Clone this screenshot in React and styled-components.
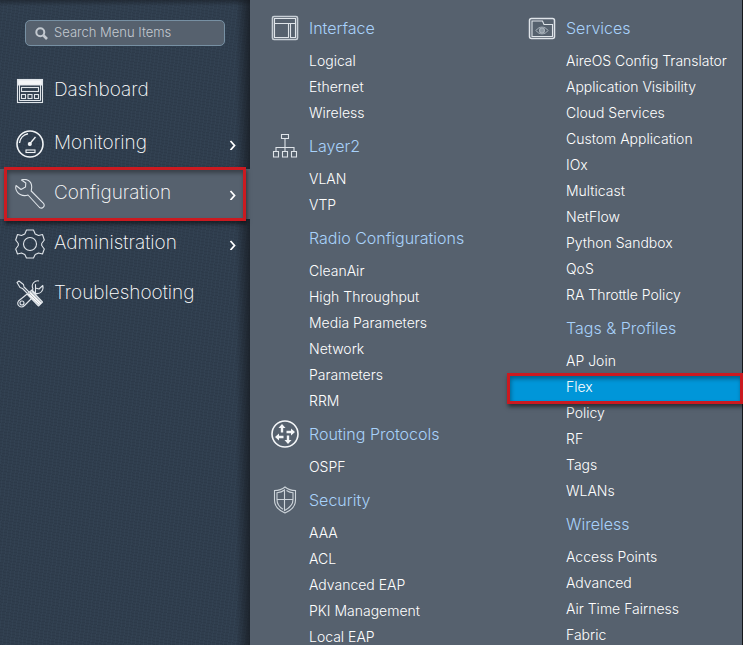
import React, { useState } from 'react';
import styled, { createGlobalStyle, css } from 'styled-components';

const GlobalStyle = createGlobalStyle`
  * { box-sizing:border-box; }
  body { margin:0; background:#56616e; font-family:Inter, "Liberation Sans", Arial, sans-serif; color:#fff; }
  ul { list-style:none; margin:0; padding:0; }
  a { color:inherit; text-decoration:none; }
`;

const Page = styled.div`display:flex; height:100vh; overflow:hidden;`;

const Sidebar = styled.aside`
  flex:0 0 250px;
  min-width:0;
  padding-top:20px;
  background-color:#303e4e;
  background-image:
    linear-gradient(to right, transparent 236px, rgba(20,24,30,0.7) 100%),
    linear-gradient(to bottom, rgba(20,24,30,0.5), transparent 6px),
    repeating-linear-gradient(97deg, rgba(70,95,115,0.12) 0 1px, transparent 1px 4px),
    repeating-linear-gradient(10deg, rgba(15,25,35,0.1) 0 1px, transparent 1px 3px);
`;
const SearchBox = styled.label`
  display:flex;
  align-items:center;
  gap:6px;
  height:26px;
  margin:0 25px 20px;
  padding:0 9px;
  border:1px solid #7790a3;
  border-radius:5px;
  background:#56616e;
  svg { flex:none; }
`;
const SearchInput = styled.input`
  flex:1;
  width:100%;
  min-width:0;
  padding:0 0 2px;
  border:0;
  outline:0;
  background:none;
  color:#fff;
  font:300 13px Inter, "Liberation Sans", sans-serif;
  &::placeholder { color:#c3c9d0; opacity:1; }
`;

const Marked = css`
  position:relative;
  &::after {
    content:'';
    position:absolute;
    inset:${({ $inset }) => $inset};
    border:3px solid #cb1a20;
    box-shadow:1px 3px 4px rgba(0,0,0,0.5), inset 1px 3px 4px rgba(0,0,0,0.35);
    pointer-events:none;
  }
`;

const MenuRow = styled.a`
  display:flex;
  align-items:center;
  gap:9px;
  height:50px;
  padding:0 13px 0 15px;
  background:${({ $active }) => $active ? '#56616e' : 'none'};
  svg { flex:none; }
  ${({ $active }) => $active && Marked}
`;
const MenuList = styled.ul`li:first-child { margin-bottom:3px; }`;
const MenuLabel = styled.span`flex:1; padding-bottom:3px; font-size:19px; font-weight:200; line-height:24px;`;

const Panel = styled.nav`
  flex:1;
  display:grid;
  grid-template-columns:minmax(0, 257fr) minmax(0, 235fr);
  align-items:start;
  padding-top:8px;
  background:#56616e;
  border-right:1px solid #15181c;
`;
const GroupTitle = styled.h2`
  display:grid;
  grid-template-columns:28px 1fr;
  align-items:center;
  gap:10px;
  height:40px;
  margin:0;
  padding-left:21px;
  color:#a8d1fa;
  font-size:16px;
  font-weight:300;
  span { grid-column:2; }
`;
const SubLink = styled.a`
  display:block;
  padding-left:59px;
  font-size:14px;
  font-weight:300;
  line-height:26px;
  white-space:nowrap;
  background:${({ $active }) => $active ? '#0096d9' : 'none'};
  box-shadow:${({ $active }) => $active ? '0 2px #0096d9' : 'none'};
  ${({ $active }) => $active && Marked}
`;

const Icon = ({ size = 28, children, ...rest }) => (
  <svg width={size} height={size} viewBox={`0 0 ${size} ${size}`} fill="none" stroke="#dfe4e9" strokeWidth="1.1" aria-hidden="true" {...rest}>
    {children}
  </svg>
);

const SearchIcon = () => (
  <Icon size={13} stroke="#c3c9d0">
    <circle cx="5.3" cy="5.3" r="4" strokeWidth="2" />
    <path d="M8.5 8.5L12 12" strokeWidth="2.6" />
  </Icon>
);

const Chevron = () => (
  <svg width="8" height="12" viewBox="0 0 8 12" fill="none" stroke="#fff" strokeWidth="1.8" aria-hidden="true">
    <path d="M1.5 3l4 4.5-4 4.5" />
  </svg>
);

const DashboardIcon = () => (
  <Icon size={30}>
    <rect x="2.5" y="3.5" width="25" height="23" />
    <path d="M3 4h24v5H3z" fill="#f4f6f8" />
    <path d="M4.5 9v15.5h21V9" strokeWidth="1" />
    <rect x="6.5" y="11.5" width="17" height="4" />
    <rect x="6.5" y="18.5" width="4" height="4" />
    <rect x="13" y="18.5" width="4" height="4" />
    <rect x="19.5" y="18.5" width="4" height="4" />
  </Icon>
);

const MonitoringIcon = () => (
  <Icon size={30} stroke="#f1f4f6">
    <circle cx="15" cy="15" r="13" strokeWidth="1.6" />
    <path d="M4.5 14A10.5 10.5 0 0 1 13 4.8" strokeWidth="1.5" />
    <path d="M15 14.5L20.5 8" strokeWidth="1.3" />
    <circle cx="14.8" cy="15" r="1.5" fill="#f1f4f6" />
    <rect x="11" y="21" width="9" height="2.5" />
  </Icon>
);

const ConfigurationIcon = () => (
  <Icon size={30}>
    <path d="M6.5 1C11-1 17 2 16.7 8.5L16.2 12 28.5 24.3C30.5 27 27.5 30.5 24.5 28.5L13 16C8 18 1.5 15 .7 9L1 6.5 6 10.5 10.5 8 10.8 4z" strokeLinejoin="round" />
  </Icon>
);

const AdministrationIcon = () => (
  <Icon size={30}>
    <path d="M11.5 1H18.5L20.2 5 23.5 6.5 27.5 5.5 29.3 11 26.7 14.5V16.5L29.3 20 27.5 25 23.5 24 20.2 25.5 18.5 29H11.5L9.8 25.5 6.5 24 2.5 25 .7 20 3.3 16.5V14.5L.7 11 2.5 5.5 6.5 6.5 9.8 5z" strokeLinejoin="round" />
    <circle cx="15" cy="15" r="6.5" />
  </Icon>
);

const TroubleshootingIcon = () => (
  <Icon size={30} strokeLinejoin="round">
    <path d="M2 3.5L4 2 8.5 5.5 9 8 15 14 13.5 15.5 7.5 9.5 5 8.5z" />
    <path d="M24 2C20 1 15.5 5 18 10L16.5 12M20.5 14.5C25.5 15.5 29 11.5 27.8 6.5L24 10 20.5 9 20.5 5.5z" />
    <path d="M17 11L21 15 9.5 26.5C6 30 1 26 3.5 22z" />
    <circle cx="7" cy="24" r="2" />
    <path d="M12 15L23.5 27 27.5 23 17 12" fill="#a9b1b9" />
    <path d="M13.5 15L24.5 25.5M15 13.5L26 24.5" stroke="#fff" />
  </Icon>
);

const InterfaceIcon = () => (
  <Icon>
    <rect x="1.5" y="2.5" width="25" height="23" rx="1.5" strokeWidth="1.6" stroke="#c8cfd6" />
    <path d="M3.5 4.5H24.5V9.5H3.5zM3.5 9.5V23.5H17.5V9.5M19.500 10V23.500H24.500V9.500" />
  </Icon>
);

const LayerIcon = () => (
  <Icon>
    <path d="M10.5 2.5h7v4h-7zM14 6.5V19M5 19v-3.5h18V19M2.5 19.5h5v5.5h-5zM11.5 19.5h5v5.5h-5zM20.5 19.5h5v5.5h-5z" />
  </Icon>
);

const RoutingIcon = () => (
  <Icon stroke="#f4f6f8">
    <circle cx="14" cy="14" r="13" strokeWidth="1.6" />
    <path d="M11 12.5V6M17 15.5V22M12.5 17H6M15.5 12H22" strokeWidth="2.4" />
    <path d="M7.5 8L11 4 14.5 8zM13.5 20L17 24 20.5 20zM8 13.5L4 17 8 20.5zM20 8.5L24 12 20 15.5z" fill="#f4f6f8" stroke="none" />
  </Icon>
);

const SecurityIcon = () => (
  <Icon stroke="#cdd4da">
    <path d="M14 1C11 3.5 7.500 4.500 3.500 4.500V14C3.500 20.500 8 24.500 14 27 20 24.500 24.500 20.500 24.500 14V4.500C20.500 4.500 17 3.500 14 1z" />
    <path d="M13.500 4C11.500 5.600 9 6.500 6 6.800V13.500H22C22 19 18.500 22 13.500 24.500zM6 13.500C6 18.500 9 21.500 12 23.200M15.500 4.500C17.500 5.800 19.500 6.600 22 6.800V13.500" />
  </Icon>
);

const ServicesIcon = () => (
  <Icon>
    <rect x="1.5" y="4.5" width="25" height="20" rx="2" strokeWidth="1.5" />
    <path d="M4 22.5V7h10.5l1.5 3.5h8.5v12z" />
    <path d="M8 16.5c3-4.5 9-4.5 12 0-3 4.5-9 4.5-12 0z" stroke="#aab3bc" strokeWidth="1" />
    <circle cx="14" cy="16.5" r="2.5" fill="#8c97a2" stroke="#aab3bc" />
  </Icon>
);

const mainMenu = [
  { label: 'Dashboard', icon: DashboardIcon },
  { label: 'Monitoring', icon: MonitoringIcon, arrow: true },
  { label: 'Configuration', icon: ConfigurationIcon, arrow: true },
  { label: 'Administration', icon: AdministrationIcon, arrow: true },
  { label: 'Troubleshooting', icon: TroubleshootingIcon },
];

const columns = [
  [
    { title: 'Interface', icon: InterfaceIcon, items: ['Logical', 'Ethernet', 'Wireless'] },
    { title: 'Layer2', icon: LayerIcon, items: ['VLAN', 'VTP'] },
    { title: 'Radio Configurations', items: ['CleanAir', 'High Throughput', 'Media Parameters', 'Network', 'Parameters', 'RRM'] },
    { title: 'Routing Protocols', icon: RoutingIcon, items: ['OSPF'] },
    { title: 'Security', icon: SecurityIcon, items: ['AAA', 'ACL', 'Advanced EAP', 'PKI Management', 'Local EAP'] },
  ],
  [
    {
      title: 'Services',
      icon: ServicesIcon,
      items: ['AireOS Config Translator', 'Application Visibility', 'Cloud Services', 'Custom Application', 'IOx', 'Multicast', 'NetFlow', 'Python Sandbox', 'QoS', 'RA Throttle Policy'],
    },
    { title: 'Tags & Profiles', items: ['AP Join', 'Flex', 'Policy', 'RF', 'Tags', 'WLANs'] },
    { title: 'Wireless', items: ['Access Points', 'Advanced', 'Air Time Fairness', 'Fabric'] },
  ],
];

const MenuGroup = ({ group, selected, onSelect }) => (
  <section>
    <GroupTitle>
      {group.icon && <group.icon />}
      <span>{group.title}</span>
    </GroupTitle>
    <ul>
      {group.items.map((item) => (
        <li key={item}>
          <SubLink href="#" $active={item === selected} $inset="-1px -1px -4px 0" onClick={() => onSelect(item)}>{item}</SubLink>
        </li>
      ))}
    </ul>
  </section>
);

function App() {
  const [section, setSection] = useState('Configuration');
  const [selected, setSelected] = useState('Flex');
  const [query, setQuery] = useState('');

  return (
    <Page>
      <GlobalStyle />
      <Sidebar>
        <SearchBox>
          <SearchIcon />
          <SearchInput type="text" aria-label="Search Menu Items" placeholder="Search Menu Items" value={query} onChange={(e) => setQuery(e.target.value)} />
        </SearchBox>
        <MenuList>
          {mainMenu.map(({ label, icon: MenuIcon, arrow }) => (
            <li key={label}>
              <MenuRow href="#" $active={label === section} $inset="-2px 4px" onClick={() => setSection(label)}>
                <MenuIcon />
                <MenuLabel>{label}</MenuLabel>
                {arrow && <Chevron />}
              </MenuRow>
            </li>
          ))}
        </MenuList>
      </Sidebar>
      <Panel>
        {columns.map((groups, i) => (
          <div key={i}>
            {groups.map((group) => (
              <MenuGroup key={group.title} group={group} selected={selected} onSelect={setSelected} />
            ))}
          </div>
        ))}
      </Panel>
    </Page>
  );
}

export default App;
